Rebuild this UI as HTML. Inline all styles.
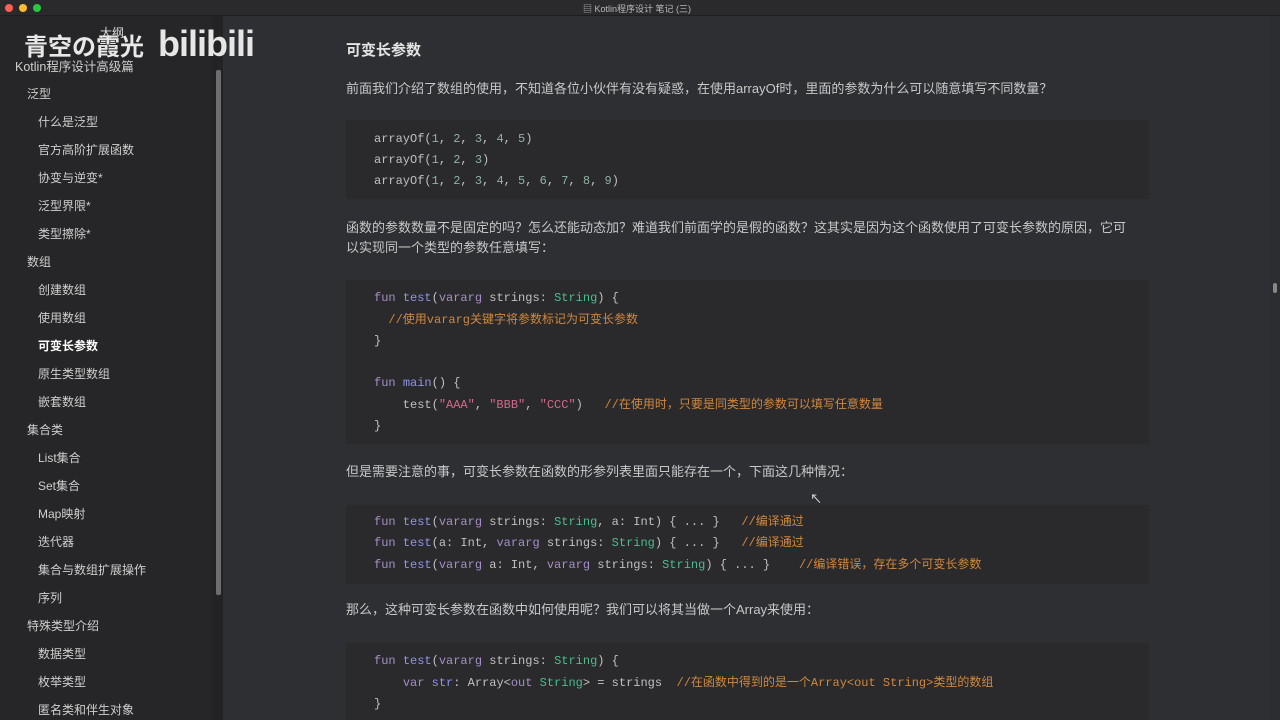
<!DOCTYPE html>
<html><head><meta charset="utf-8"><style>
*{margin:0;padding:0;box-sizing:border-box}
body{width:1280px;height:720px;overflow:hidden;background:#2d2f33;font-family:"Liberation Sans","Noto Sans CJK SC",sans-serif;position:relative;color:#c9c9c9}
.a{position:absolute;white-space:pre}
#tb{left:0;top:0;width:1280px;height:16px;background:#2a2a2c;border-bottom:1px solid #1e1e20}
.dot{position:absolute;top:4px;width:8px;height:8px;border-radius:50%}
#sb{left:0;top:16px;width:212px;height:704px;background:#262628}
#st{left:212px;top:16px;width:11px;height:704px;background:#232325}
#th{left:216px;top:70px;width:5px;height:525px;background:#6e6e70;border-radius:2px}
.s{font-size:12px;color:#cfcfcf;line-height:16px}
.p{font-size:13px;color:#c8c8c8;line-height:18px;left:346px}
.cb{position:absolute;left:346px;width:803px;background:#2a292b}
.c{font-family:"Liberation Mono","Noto Sans CJK SC",monospace;font-size:12px;color:#c0c0c0;line-height:16px;left:374px}
.k{color:#a68fc9}.f{color:#8f95e8}.t{color:#4bbd8f}.n{color:#8fb3a5}.st{color:#d26a8c}.cm{color:#d1883c}
</style></head><body>
<div class="a" id="tb"><div class="dot" style="left:5px;background:#fe5f57"></div><div class="dot" style="left:19px;background:#febc2e"></div><div class="dot" style="left:33px;background:#28c840"></div>
<div class="a" style="left:583px;top:2px;font-size:9px;color:#bbb">▤ Kotlin程序设计 笔记 (三)</div></div>
<div class="a" id="sb"></div><div class="a" id="st"></div><div class="a" id="th"></div>
<div class="a" style="left:1270px;top:16px;width:10px;height:704px;background:#2b2d31"></div>
<div class="a" style="left:1273px;top:283px;width:4px;height:10px;background:#888;border-radius:2px"></div>
<div class="a" style="left:100px;top:24px;font-size:12px;color:#ddd">大纲</div>
<div class="a" style="left:24px;top:34px;font-size:24px;font-weight:bold;color:#e8e8e8;line-height:28px">青空の霞光</div>
<div class="a" style="left:158px;top:22px;font-size:36px;font-weight:bold;color:#e6e6e6;letter-spacing:-1px;line-height:44px">bilibili</div>
<div class="a s" style="left:15px;top:59px;font-size:12.5px">Kotlin程序设计高级篇</div>
<div class="a s" style="left:27px;top:86px">泛型</div>
<div class="a s" style="left:38px;top:114px">什么是泛型</div>
<div class="a s" style="left:38px;top:142px">官方高阶扩展函数</div>
<div class="a s" style="left:38px;top:170px">协变与逆变*</div>
<div class="a s" style="left:38px;top:198px">泛型界限*</div>
<div class="a s" style="left:38px;top:226px">类型擦除*</div>
<div class="a s" style="left:27px;top:254px">数组</div>
<div class="a s" style="left:38px;top:282px">创建数组</div>
<div class="a s" style="left:38px;top:310px">使用数组</div>
<div class="a s" style="left:38px;top:338px;font-weight:bold;color:#fff">可变长参数</div>
<div class="a s" style="left:38px;top:366px">原生类型数组</div>
<div class="a s" style="left:38px;top:394px">嵌套数组</div>
<div class="a s" style="left:27px;top:422px">集合类</div>
<div class="a s" style="left:38px;top:450px">List集合</div>
<div class="a s" style="left:38px;top:478px">Set集合</div>
<div class="a s" style="left:38px;top:506px">Map映射</div>
<div class="a s" style="left:38px;top:534px">迭代器</div>
<div class="a s" style="left:38px;top:562px">集合与数组扩展操作</div>
<div class="a s" style="left:38px;top:590px">序列</div>
<div class="a s" style="left:27px;top:618px">特殊类型介绍</div>
<div class="a s" style="left:38px;top:646px">数据类型</div>
<div class="a s" style="left:38px;top:674px">枚举类型</div>
<div class="a s" style="left:38px;top:702px">匿名类和伴生对象</div>

<div class="a" style="left:346px;top:39px;font-size:15px;font-weight:bold;color:#e4e4e4">可变长参数</div>
<div class="a p" style="top:80px">前面我们介绍了数组的使用，不知道各位小伙伴有没有疑惑，在使用arrayOf时，里面的参数为什么可以随意填写不同数量？</div>
<div class="cb" style="top:120px;height:79px"></div>
<div class="a c" style="top:131px">arrayOf(<span class="n">1</span>, <span class="n">2</span>, <span class="n">3</span>, <span class="n">4</span>, <span class="n">5</span>)</div>
<div class="a c" style="top:152px">arrayOf(<span class="n">1</span>, <span class="n">2</span>, <span class="n">3</span>)</div>
<div class="a c" style="top:173px">arrayOf(<span class="n">1</span>, <span class="n">2</span>, <span class="n">3</span>, <span class="n">4</span>, <span class="n">5</span>, <span class="n">6</span>, <span class="n">7</span>, <span class="n">8</span>, <span class="n">9</span>)</div>
<div class="a p" style="top:219px">函数的参数数量不是固定的吗？怎么还能动态加？难道我们前面学的是假的函数？这其实是因为这个函数使用了可变长参数的原因，它可</div>
<div class="a p" style="top:239px">以实现同一个类型的参数任意填写：</div>
<div class="cb" style="top:280px;height:164px"></div>
<div class="a c" style="top:290px"><span class="k">fun</span> <span class="f">test</span>(<span class="k">vararg</span> strings: <span class="t">String</span>) {</div>
<div class="a c" style="top:312px"><span class="cm">  //使用vararg关键字将参数标记为可变长参数</span></div>
<div class="a c" style="top:333px">}</div>
<div class="a c" style="top:375px"><span class="k">fun</span> <span class="f">main</span>() {</div>
<div class="a c" style="top:397px">    test(<span class="st">"AAA"</span>, <span class="st">"BBB"</span>, <span class="st">"CCC"</span>)   <span class="cm">//在使用时，只要是同类型的参数可以填写任意数量</span></div>
<div class="a c" style="top:418px">}</div>
<div class="a p" style="top:463px">但是需要注意的事，可变长参数在函数的形参列表里面只能存在一个，下面这几种情况：</div>
<div class="a" style="left:810px;top:490px;font-size:12px;color:#eee">↖</div>
<div class="cb" style="top:505px;height:79px"></div>
<div class="a c" style="top:514px"><span class="k">fun</span> <span class="f">test</span>(<span class="k">vararg</span> strings: <span class="t">String</span>, a: Int) { ... }   <span class="cm">//编译通过</span></div>
<div class="a c" style="top:535px"><span class="k">fun</span> <span class="f">test</span>(a: Int, <span class="k">vararg</span> strings: <span class="t">String</span>) { ... }   <span class="cm">//编译通过</span></div>
<div class="a c" style="top:557px"><span class="k">fun</span> <span class="f">test</span>(<span class="k">vararg</span> a: Int, <span class="k">vararg</span> strings: <span class="t">String</span>) { ... }    <span class="cm">//编译错误，存在多个可变长参数</span></div>
<div class="a p" style="top:601px">那么，这种可变长参数在函数中如何使用呢？我们可以将其当做一个Array来使用：</div>
<div class="cb" style="top:643px;height:77px"></div>
<div class="a c" style="top:653px"><span class="k">fun</span> <span class="f">test</span>(<span class="k">vararg</span> strings: <span class="t">String</span>) {</div>
<div class="a c" style="top:675px">    <span class="k">var</span> <span class="f">str</span>: Array&lt;<span class="k">out</span> <span class="t">String</span>&gt; = strings  <span class="cm">//在函数中得到的是一个Array&lt;out String&gt;类型的数组</span></div>
<div class="a c" style="top:696px">}</div>
</body></html>
